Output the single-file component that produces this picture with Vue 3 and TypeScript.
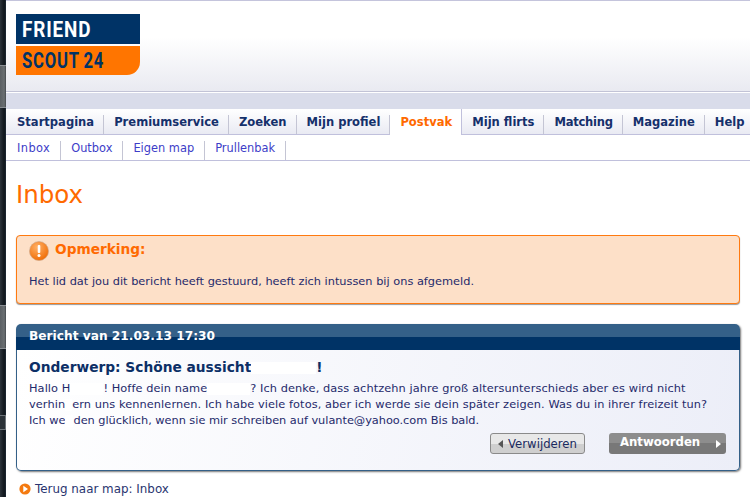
<template>
  <div class="page">
    <div class="chrome">
      <div
        v-for="seg in chromeSegments"
        :key="seg.top"
        class="seg"
        :class="seg.kind"
        :style="{ height: seg.height + 'px' }"
      ></div>
    </div>
    <div class="site">
      <header class="top">
        <div class="logo">
          <div class="logo-friend"><span>FRIEND</span></div>
          <div class="logo-scout"><span>SCOUT 24</span></div>
        </div>
      </header>
      <div class="band"></div>

      <nav class="tabs">
        <a
          v-for="tab in tabs"
          :key="tab"
          class="tab"
          :class="{ active: tab === 'Postvak' }"
        >{{ tab }}</a>
      </nav>
      <nav class="subtabs">
        <a v-for="item in subTabs" :key="item" class="subtab">{{ item }}</a>
      </nav>

      <main class="content">
        <h1>Inbox</h1>

        <section class="notice">
          <h2>
            <svg width="20" height="20" viewBox="0 0 20 20">
              <defs>
                <radialGradient id="warn" cx="40%" cy="30%" r="75%">
                  <stop offset="0" stop-color="#ffb066" />
                  <stop offset="1" stop-color="#f06a00" />
                </radialGradient>
              </defs>
              <circle cx="10" cy="10" r="9.5" fill="url(#warn)" stroke="#c9a58a" stroke-width="0.6" />
              <rect x="8.7" y="4" width="2.6" height="8" rx="1" fill="#fff" />
              <circle cx="10" cy="14.6" r="1.5" fill="#fff" />
            </svg>
            Opmerking:
          </h2>
          <p>Het lid dat jou dit bericht heeft gestuurd, heeft zich intussen bij ons afgemeld.</p>
        </section>

        <section class="message">
          <div class="message-head">Bericht van 21.03.13 17:30</div>
          <div class="message-body">
            <h3>Onderwerp: Schöne aussicht<span class="blot subject"></span>!</h3>
            <p>
              <span class="line-one">Hallo H<span class="blot b1"></span>! Hoffe dein name<span class="blot b2"></span>? Ich denke, dass achtzehn jahre groß altersunterschieds aber es wird nicht</span><br />
              <span class="line-two">verhin<span class="blot b3"></span>ern uns kennenlernen. Ich habe viele fotos, aber ich werde sie dein später zeigen. Was du in ihrer freizeit tun?</span><br />
              <span class="line-three">Ich we<span class="blot b4"></span>den glücklich, wenn sie mir schreiben auf vulante@yahoo.com Bis bald.</span>
            </p>
            <div class="actions">
              <button class="btn-delete"><i class="arrow-left"></i>Verwijderen</button>
              <button class="btn-reply">Antwoorden<i class="arrow-right"></i></button>
            </div>
          </div>
        </section>

        <a class="back">
          <svg width="12" height="12" viewBox="0 0 12 12">
            <circle cx="6" cy="6" r="5.6" fill="#f47a10" />
            <path d="M4.3 2.8 9 6 4.3 9.2Z" fill="#fff" />
          </svg>
          Terug naar map: Inbox
        </a>
      </main>
    </div>
  </div>
</template>

<script setup lang="ts">
interface ChromeSegment {
  top: number
  height: number
  kind: 'dark' | 'light' | 'outlined'
}

const tabs: string[] = [
  'Startpagina',
  'Premiumservice',
  'Zoeken',
  'Mijn profiel',
  'Postvak',
  'Mijn flirts',
  'Matching',
  'Magazine',
  'Help',
]

const subTabs: string[] = ['Inbox', 'Outbox', 'Eigen map', 'Prullenbak']

const chromeSegments: ChromeSegment[] = [
  { top: 0, height: 65, kind: 'dark' },
  { top: 65, height: 43, kind: 'light' },
  { top: 108, height: 197, kind: 'dark' },
  { top: 305, height: 44, kind: 'light' },
  { top: 349, height: 66, kind: 'dark' },
  { top: 415, height: 15, kind: 'outlined' },
  { top: 430, height: 67, kind: 'dark' },
]
</script>

<style scoped>
.page {
  display: flex;
  width: 750px;
  height: 497px;
  overflow: hidden;
  background: #fff;
  font-family: "DejaVu Sans", Verdana, sans-serif;
  font-size: 11.35px;
  color: #1f2a6b;
}

.chrome {
  flex: 0 0 6px;
}

.seg {
  box-sizing: border-box;
}

.seg.dark {
  background: linear-gradient(90deg, #2c333a, #10161c 70%, #1e2a35);
}

.seg.light {
  border-top: 1px solid #8a8f94;
  border-bottom: 1px solid #8a8f94;
  background: linear-gradient(90deg, #5a5f63, #6a6f72 70%, #44494d);
}

.seg.outlined {
  border: 1px solid #6c7378;
  border-left: 0;
  background: #2b3238;
}

.site {
  flex: 1;
  min-width: 0;
}

.top {
  box-sizing: border-box;
  height: 92px;
  padding: 13px 0 0 10px;
  border-top: 1px solid #c4c4dc;
  border-bottom: 1px solid #c2c3d6;
  background: linear-gradient(#fff 40%, #e9eaf1);
}

.logo {
  width: 124px;
}

.logo-friend,
.logo-scout {
  padding-left: 6px;
  font-family: Roboto, sans-serif;
  font-size: 22.5px;
  font-weight: 700;
  white-space: nowrap;
}

.logo span {
  display: inline-block;
  transform-origin: left;
}

.logo-friend {
  height: 30px;
  background: #003366;
  line-height: 30px;
  color: #fff;
}

.logo-friend span {
  letter-spacing: 1px;
  transform: scaleX(0.84);
}

.logo-scout {
  height: 29px;
  margin-top: 2px;
  border-bottom-right-radius: 13px;
  background: #ff7500;
  line-height: 29px;
  color: #003366;
}

.logo-scout span {
  letter-spacing: 1.1px;
  word-spacing: -1.5px;
  transform: scaleX(0.74);
}

.band {
  height: 16px;
  margin-top: 1px;
  background: #d9dcea;
}

.tabs {
  display: flex;
  height: 26px;
  box-sizing: border-box;
  border-bottom: 1px solid #c0c0dc;
  background: linear-gradient(#fff, #e9eaf3);
}

.tab {
  display: block;
  box-sizing: border-box;
  height: 25px;
  padding: 0 9px 0 10px;
  border-right: 1px solid #c4c5d4;
  border-image: linear-gradient(transparent 25%, #c4c5d4 25%) 1;
  font-size: 11.55px;
  font-weight: 700;
  line-height: 27px;
  color: #15306b;
  white-space: nowrap;
}

.tab:first-child {
  padding-left: 11px;
}

.tab:nth-child(7) {
  letter-spacing: -0.25px;
}

.tab:last-child {
  border-right: 0;
}

.tab.active {
  height: 26px;
  background: #fff;
  color: #ff6a00;
  border-image: none;
  border-right-color: #c0c0dc;
}

.subtabs {
  display: flex;
  height: 26px;
  box-sizing: border-box;
  border-bottom: 1px solid #c0c0dc;
}

.subtab {
  height: 25px;
  padding: 0 10px;
  border-right: 1px solid #c4c5d4;
  border-image: linear-gradient(transparent 25%, #c4c5d4 25%) 1;
  font-size: 11.4px;
  line-height: 26px;
  color: #3d3dc8;
}

.subtab:first-child {
  padding-left: 11px;
  letter-spacing: 0.4px;
}

.content {
  padding: 0 10px;
}

h1 {
  margin: 0;
  padding-top: 19px;
  font-size: 24.5px;
  font-weight: 400;
  line-height: 30px;
  color: #ff6a00;
}

.notice {
  box-sizing: border-box;
  height: 69px;
  margin-top: 25px;
  padding: 5px 12px 0;
  border: 1px solid #ff7a10;
  border-radius: 4px;
  background: #fde0c8;
  box-shadow: 0 1px 1px #999;
}

.notice h2 {
  display: flex;
  align-items: flex-start;
  gap: 6px;
  height: 20px;
  margin: 0;
  font-size: 13.7px;
  font-weight: 700;
  line-height: 17px;
  color: #ff6a00;
}

.notice p {
  margin: 12px 0 0;
  line-height: 16px;
}

.message {
  margin-top: 20px;
  border-radius: 5px;
  box-shadow: 1px 1px 2px #777;
}

.message-head {
  box-sizing: border-box;
  height: 26px;
  padding-left: 13px;
  border-radius: 5px 5px 0 0;
  background: linear-gradient(#346088 50%, #003366 50%);
  font-size: 12.2px;
  font-weight: 700;
  line-height: 25px;
  color: #fff;
}

.message-body {
  box-sizing: border-box;
  height: 121px;
  padding: 7px 12px 0;
  border: 1px solid #346088;
  border-top: 0;
  border-radius: 0 0 5px 5px;
  background: linear-gradient(100deg, #fff, #eceef8);
}

.message-body h3 {
  margin: 0;
  font-size: 13.75px;
  font-weight: 700;
  line-height: 20px;
  color: #0c2f66;
}

.message-body p {
  margin: 3px 0 0;
  line-height: 16px;
  white-space: nowrap;
}

.line-one {
  letter-spacing: 0.08px;
}

.line-two {
  letter-spacing: 0.08px;
}

.line-three {
  letter-spacing: -0.03px;
}

.blot {
  display: inline-block;
  height: 12px;
  vertical-align: middle;
  background: #fff;
}

.subject {
  width: 65px;
}

.b1 {
  width: 33px;
}

.b2 {
  width: 43px;
}

.b3 {
  width: 7px;
}

.b4 {
  width: 8px;
}

.actions {
  display: flex;
  justify-content: flex-end;
  gap: 24px;
  margin-top: 5px;
  padding-right: 1px;
}

.actions button {
  display: flex;
  align-items: center;
  box-sizing: border-box;
  height: 21px;
  padding: 0;
  font-family: inherit;
  font-size: 11.7px;
}

.btn-delete {
  width: 95px;
  border: 1px solid #8a8a8a;
  border-radius: 3px;
  background: linear-gradient(#e8e8e8 50%, #cfcfcf 50%);
  color: #1a2a60;
}

.arrow-left {
  margin: 0 5px 0 7px;
  border: 4px solid transparent;
  border-left: 0;
  border-right: 5px solid #555;
}

.btn-reply {
  justify-content: space-between;
  width: 117px;
  padding: 0 5px 3px 11px !important;
  border: 0;
  border-radius: 3px;
  background: linear-gradient(#8d8d8d 50%, #787878 50%);
  font-weight: 700;
  color: #fff;
}

.arrow-right {
  margin-top: 3px;
  border: 4px solid transparent;
  border-right: 0;
  border-left: 5px solid #fff;
}

.back {
  display: flex;
  align-items: center;
  gap: 4px;
  margin-top: 11px;
  margin-left: 3px;
  font-size: 11.9px;
  line-height: 14px;
  color: #2a3570;
}
</style>

<style>
html,
body {
  margin: 0;
  overflow: hidden;
}
</style>
